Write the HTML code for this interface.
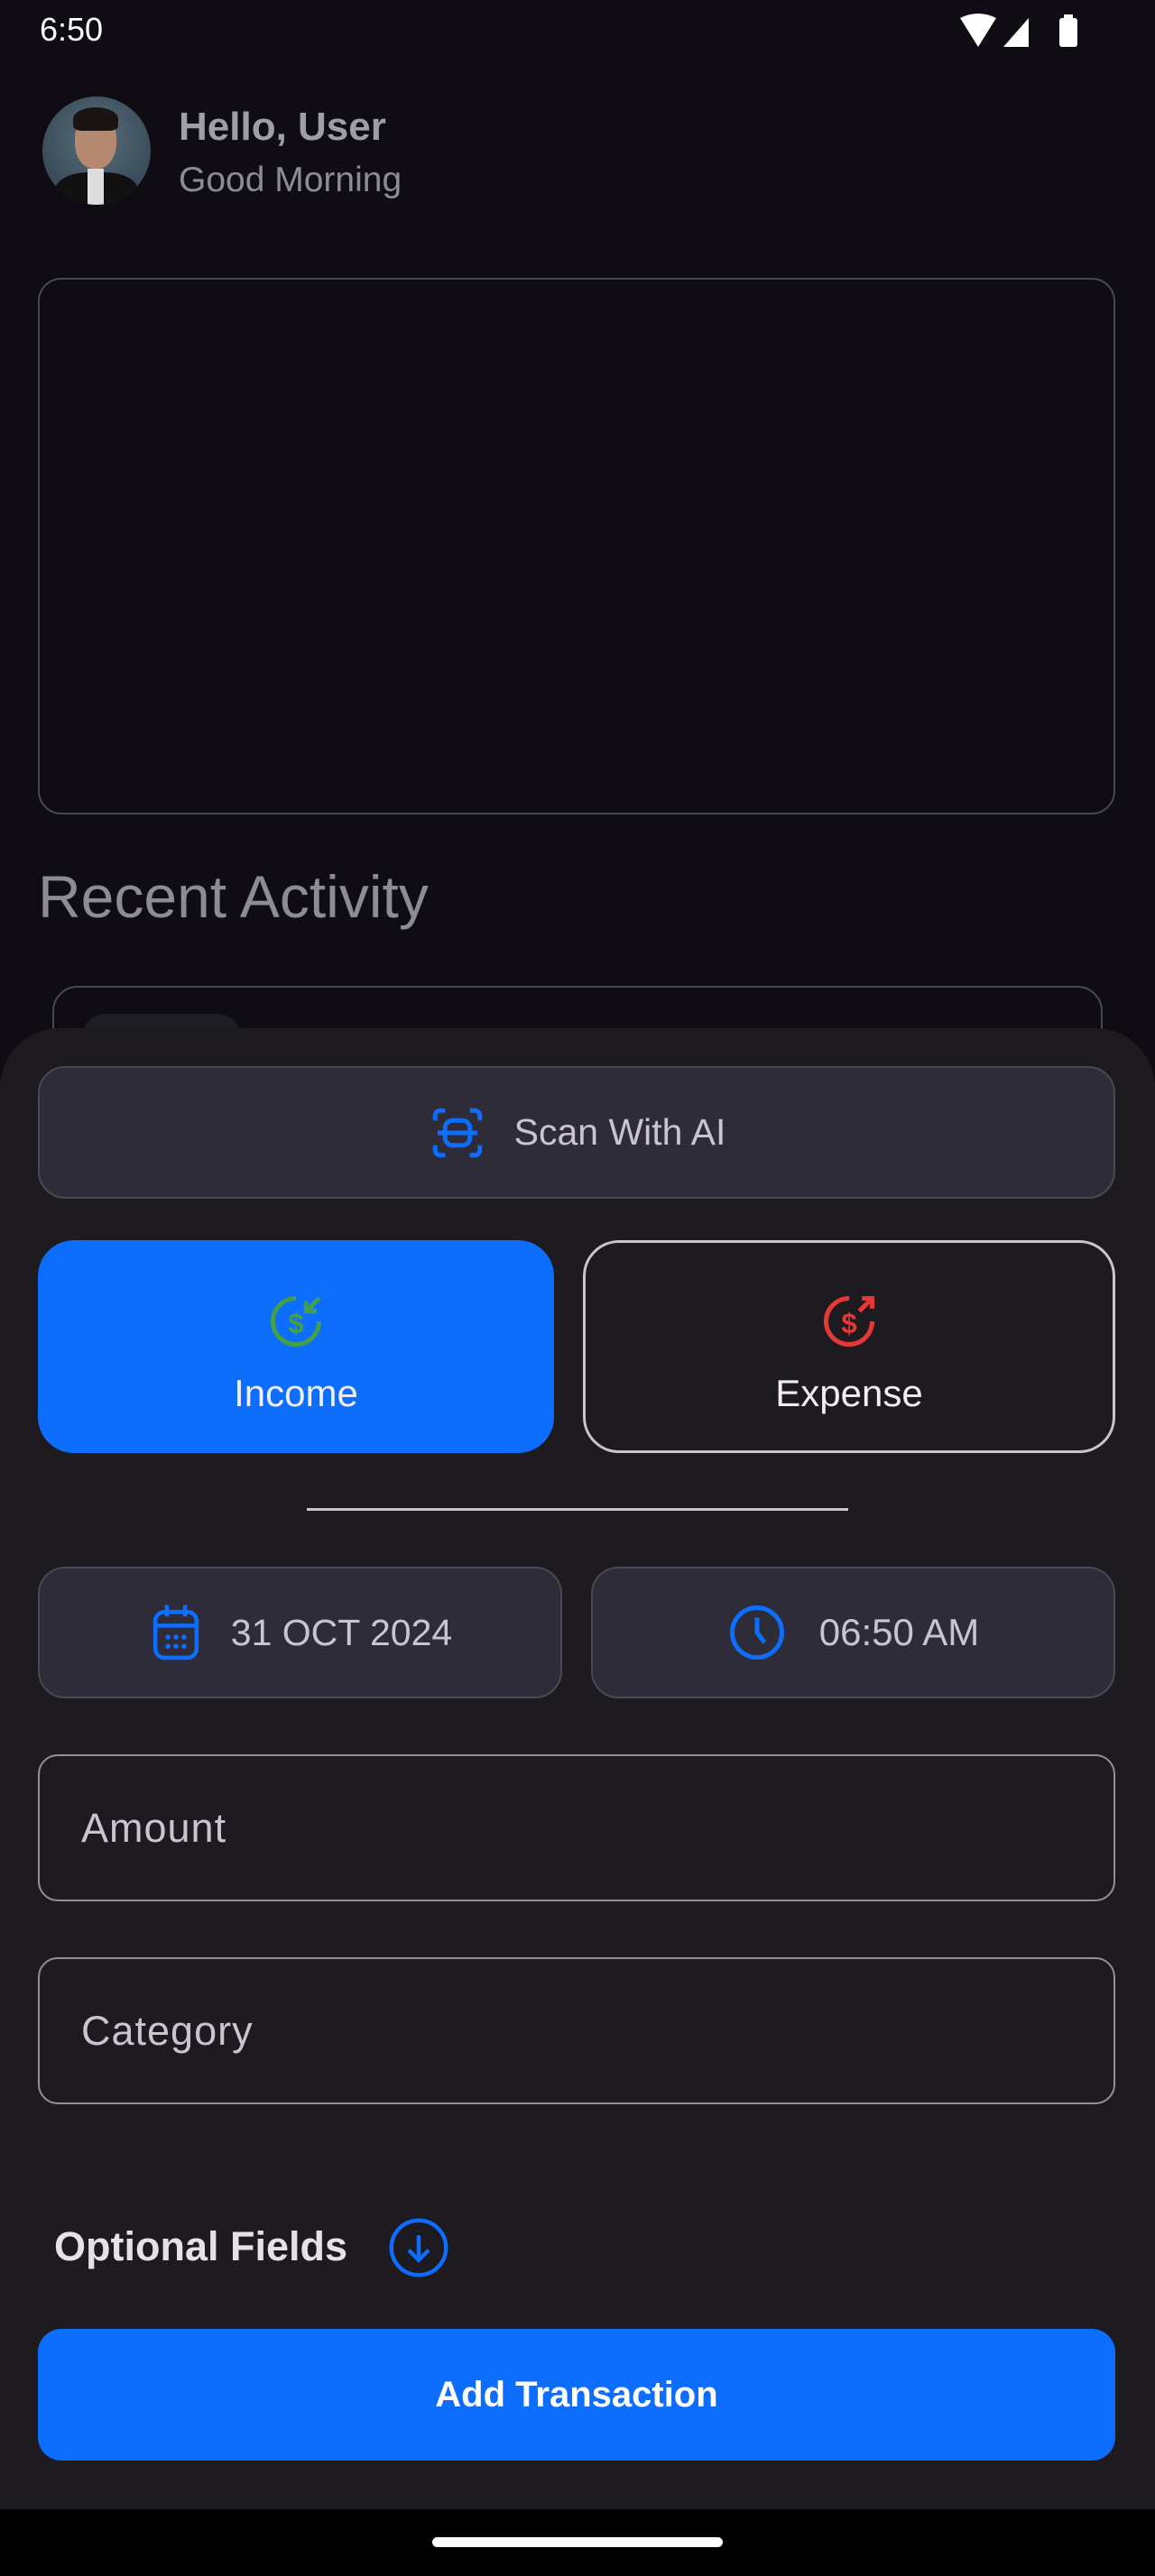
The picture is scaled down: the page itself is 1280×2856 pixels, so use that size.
<!DOCTYPE html>
<html><head><meta charset="utf-8"><style>
*{box-sizing:border-box;margin:0;padding:0}
body{width:1280px;height:2856px;background:#0f0d13;font-family:"Liberation Sans",sans-serif;position:relative;overflow:hidden;color:#cac4d0}
.a{position:absolute}
.ctr{display:flex;align-items:center;justify-content:center}
</style></head><body>
<div class="a" style="left:44px;top:12px;font-size:36px;color:#fff">6:50</div>
<svg class="a" style="left:1062px;top:14px" width="140" height="42" viewBox="0 0 140 42">
<path d="M2 6 Q22 -4 42 6 L22 38 Z" fill="#fff"/>
<path d="M50 38 L78 6 L78 38 Z" fill="#fff"/>
<rect x="112" y="6" width="20" height="32" rx="3" fill="#fff"/><rect x="117" y="2" width="10" height="5" fill="#fff"/>
</svg>
<div class="a" style="left:47px;top:107px;width:120px;height:120px;border-radius:50%;background:radial-gradient(circle at 50% 40%,#5a6e7c,#2c3d4a);overflow:hidden">
<div class="a" style="left:36px;top:18px;width:46px;height:62px;border-radius:45%;background:#b58a70"></div>
<div class="a" style="left:34px;top:12px;width:50px;height:26px;border-radius:50% 50% 20% 20%;background:#1a1414"></div>
<div class="a" style="left:14px;top:84px;width:92px;height:50px;border-radius:40% 40% 0 0;background:#111"></div>
<div class="a" style="left:50px;top:80px;width:18px;height:40px;background:#ddd"></div>
</div>
<div class="a" style="left:198px;top:116px;font-size:44px;font-weight:bold;color:#a09ea5">Hello, User</div>
<div class="a" style="left:198px;top:178px;font-size:39px;color:#8e8c93">Good Morning</div>
<div class="a" style="left:42px;top:308px;width:1194px;height:595px;border:2px solid #4a4850;border-radius:26px"></div>
<div class="a" style="left:42px;top:956px;font-size:66px;color:#8e8c93">Recent Activity</div>
<div class="a" style="left:58px;top:1093px;width:1164px;height:120px;border:2px solid #4a4850;border-radius:28px"></div>
<div class="a" style="left:91px;top:1124px;width:176px;height:60px;background:#1f1d24;border-radius:26px"></div>
<div class="a" style="left:0;top:1140px;width:1280px;height:1642px;background:#1d1b20;border-radius:66px 66px 0 0"></div>
<div class="a ctr" style="left:42px;top:1182px;width:1194px;height:147px;background:#2f2c3a;border:2px solid #4a4850;border-radius:30px;font-size:41px;color:#cac4d0">
<svg width="66" height="66" viewBox="0 0 24 24" fill="none" stroke="#0d6efd" stroke-width="1.8" style="margin-right:30px"><path d="M7 3H5a2 2 0 0 0-2 2v2M17 3h2a2 2 0 0 1 2 2v2M7 21H5a2 2 0 0 1-2-2v-2M17 21h2a2 2 0 0 0 2-2v-2"/><rect x="7" y="7" width="10" height="10" rx="3"/><path d="M4 12h16"/></svg>Scan With AI</div>
<div class="a ctr" style="left:42px;top:1375px;width:572px;height:236px;background:#0d6efd;border-radius:40px;flex-direction:column;font-size:42px;color:#f0eef4;padding-top:14px">
<svg width="68" height="68" viewBox="0 0 24 24" fill="none" stroke="#43a047" stroke-width="1.8"><path d="M12 3a9 9 0 1 0 9 9"/><path d="M21 3l-5 5M16 4v4h4"/><text x="12" y="16.5" font-size="11" font-weight="bold" fill="#43a047" stroke="none" text-anchor="middle" font-family="Liberation Sans">$</text></svg>
<div style="margin-top:22px">Income</div></div>
<div class="a ctr" style="left:646px;top:1375px;width:590px;height:236px;border:3px solid #cac4d0;border-radius:40px;flex-direction:column;font-size:42px;color:#f0eef4;padding-top:14px">
<svg width="68" height="68" viewBox="0 0 24 24" fill="none" stroke="#e53935" stroke-width="1.8"><path d="M12 3a9 9 0 1 0 9 9"/><path d="M16 8l5-5M17 3h4v4"/><text x="12" y="16.5" font-size="11" font-weight="bold" fill="#e53935" stroke="none" text-anchor="middle" font-family="Liberation Sans">$</text></svg>
<div style="margin-top:22px">Expense</div></div>
<div class="a" style="left:340px;top:1672px;width:600px;height:3px;background:#cac4d0"></div>
<div class="a ctr" style="left:42px;top:1737px;width:581px;height:146px;background:#2f2c3a;border:2px solid #4a4850;border-radius:30px;font-size:41px">
<svg width="62" height="66" viewBox="0 0 24 26" fill="none" stroke="#0d6efd" stroke-width="1.8" style="margin-right:30px"><rect x="3" y="4" width="18" height="20" rx="4"/><path d="M3 10h18M8 1v5M16 1v5"/><g fill="#0d6efd" stroke="none"><circle cx="8.5" cy="15" r="1.1"/><circle cx="12" cy="15" r="1.1"/><circle cx="15.5" cy="15" r="1.1"/><circle cx="8.5" cy="19" r="1.1"/><circle cx="12" cy="19" r="1.1"/><circle cx="15.5" cy="19" r="1.1"/></g></svg>31 OCT 2024</div>
<div class="a ctr" style="left:655px;top:1737px;width:581px;height:146px;background:#2f2c3a;border:2px solid #4a4850;border-radius:30px;font-size:42px">
<svg width="66" height="66" viewBox="0 0 24 24" fill="none" stroke="#0d6efd" stroke-width="1.8" style="margin-right:36px"><circle cx="12" cy="12" r="10"/><path d="M12 6v6l3 4"/></svg>06:50 AM</div>
<div class="a" style="left:42px;top:1945px;width:1194px;height:163px;border:2px solid #938f99;border-radius:22px;padding-left:46px;display:flex;align-items:center;font-size:45px;letter-spacing:1px">Amount</div>
<div class="a" style="left:42px;top:2170px;width:1194px;height:163px;border:2px solid #938f99;border-radius:22px;padding-left:46px;display:flex;align-items:center;font-size:45px;letter-spacing:1px">Category</div>
<div class="a" style="left:60px;top:2465px;font-size:45px;font-weight:bold;color:#e6e1e5">Optional Fields</div>
<svg class="a" style="left:431px;top:2459px" width="66" height="66" viewBox="0 0 24 24" fill="none" stroke="#0d6efd" stroke-width="1.6"><circle cx="12" cy="12" r="11"/><path d="M12 7v10M8 13l4 4 4-4"/></svg>
<div class="a ctr" style="left:42px;top:2582px;width:1194px;height:146px;background:#0d6efd;border-radius:26px;font-size:40px;font-weight:bold;color:#fff">Add Transaction</div>
<div class="a" style="left:0;top:2782px;width:1280px;height:74px;background:#000"></div>
<div class="a" style="left:479px;top:2813px;width:322px;height:11px;border-radius:6px;background:#fff"></div>
</body></html>
